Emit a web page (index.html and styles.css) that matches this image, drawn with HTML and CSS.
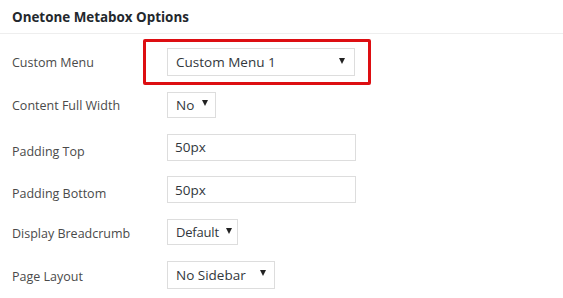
FILE: index.html
```html
<!DOCTYPE html>
<html>
<head>
<meta charset="utf-8">
<link rel="stylesheet" href="styles.css">
</head>
<body>
<div class="metabox">
  <h2 class="title">Onetone Metabox Options</h2>
  <div class="fields">
    <div class="row">
      <label class="label">Custom Menu</label>
      <div class="control highlight">
        <span class="select w-menu"><span class="val">Custom Menu 1</span><svg class="arrow" width="6" height="6" viewBox="0 0 6 6"><polygon points="0,0 6,0 3,6" fill="#222"/></svg></span>
      </div>
    </div>
    <div class="row">
      <label class="label">Content Full Width</label>
      <div class="control">
        <span class="select small w-no"><span class="val">No</span><svg class="arrow" width="6" height="6" viewBox="0 0 6 6"><polygon points="0,0 6,0 3,6" fill="#222"/></svg></span>
      </div>
    </div>
    <div class="row">
      <label class="label low">Padding Top</label>
      <div class="control"><input class="text" type="text" value="50px"></div>
    </div>
    <div class="row">
      <label class="label low">Padding Bottom</label>
      <div class="control"><input class="text" type="text" value="50px"></div>
    </div>
    <div class="row">
      <label class="label mid">Display Breadcrumb</label>
      <div class="control">
        <span class="select small w-default"><span class="val">Default</span><svg class="arrow" width="6" height="6" viewBox="0 0 6 6"><polygon points="0,0 6,0 3,6" fill="#222"/></svg></span>
      </div>
    </div>
    <div class="row">
      <label class="label mid">Page Layout</label>
      <div class="control">
        <span class="select w-layout"><span class="val">No Sidebar</span><svg class="arrow" width="6" height="6" viewBox="0 0 6 6"><polygon points="0,0 6,0 3,6" fill="#222"/></svg></span>
      </div>
    </div>
  </div>
</div>
</body>
</html>
```

FILE: styles.css
```css
html, body {
  margin: 0;
  padding: 0;
  background: #ffffff;
}
body {
  font-family: "Open Sans", "Noto Sans", "Liberation Sans", sans-serif;
  color: #444;
}
.metabox {
  width: 563px;
}
.title {
  margin: 0;
  height: 34px;
  box-sizing: border-box;
  padding: 8px 12px 0;
  font-size: 13.4px;
  font-weight: 700;
  color: #23282d;
  border-bottom: 1px solid #eeeeee;
  line-height: 18px;
}
.fields {
  display: flex;
  flex-direction: column;
  gap: 14.6px;
  padding-top: 14px;
}
.row {
  display: grid;
  grid-template-columns: 155px 1fr;
  align-items: center;
  height: 28px;
  padding-left: 12px;
}
.label {
  font-size: 12.5px;
  color: #4a4a4a;
  padding-top: 1px;
}
.label.low {
  padding-top: 8px;
}
.label.mid {
  padding-top: 3px;
}
.control {
  display: flex;
  align-items: center;
}
.highlight {
  position: relative;
  width: 188px;
}
.highlight::after {
  content: "";
  position: absolute;
  left: -24px;
  right: -16px;
  top: -9px;
  bottom: -9px;
  border: 3px solid #dd0e12;
  border-radius: 2px;
}
.select {
  display: flex;
  align-items: center;
  justify-content: space-between;
  gap: 6px;
  box-sizing: border-box;
  height: 28px;
  padding: 0 8px;
  border: 1px solid #dddddd;
  background: #fff;
  font-size: 13.5px;
  color: #32373c;
}
.select.small {
  height: 26px;
}
.arrow {
  flex: none;
  margin-top: -3px;
}
.w-menu { width: 188px; padding-right: 9px; }
.w-no { width: 49px; padding-right: 7px; }
.w-default { width: 71px; padding-right: 5px; }
.w-default .val { font-size: 13px; letter-spacing: -0.2px; }
.w-layout { width: 108px; padding-right: 8px; }
.text {
  box-sizing: border-box;
  width: 189px;
  height: 27px;
  margin: 0;
  padding: 0 7px;
  border: 1px solid #dddddd;
  font-family: inherit;
  font-size: 13.5px;
  color: #32373c;
  outline: none;
}
```
